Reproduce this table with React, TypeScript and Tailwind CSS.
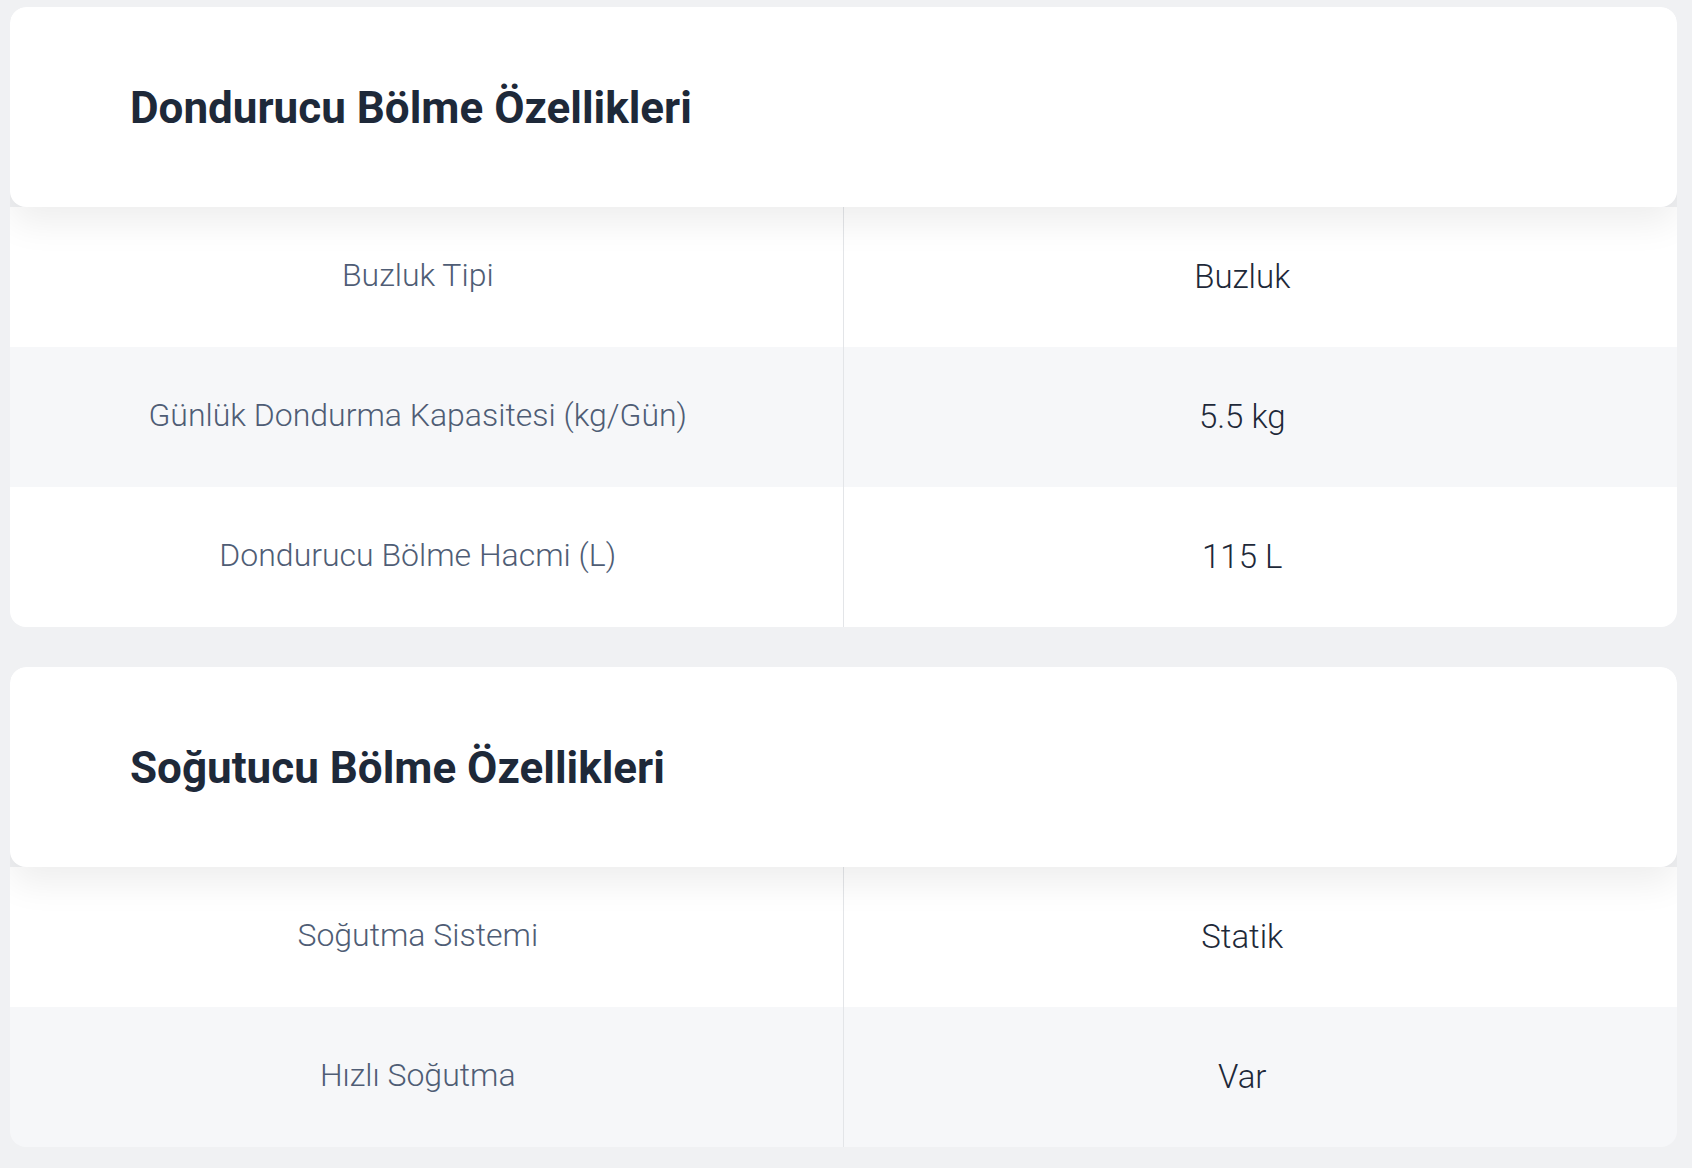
const sections = [
  {
    title: 'Dondurucu Bölme Özellikleri',
    rows: [
      { label: 'Buzluk Tipi', value: 'Buzluk' },
      { label: 'Günlük Dondurma Kapasitesi (kg/Gün)', value: '5.5 kg' },
      { label: 'Dondurucu Bölme Hacmi (L)', value: '115 L' },
    ],
  },
  {
    title: 'Soğutucu Bölme Özellikleri',
    rows: [
      { label: 'Soğutma Sistemi', value: 'Statik' },
      { label: 'Hızlı Soğutma', value: 'Var' },
    ],
  },
];

function SpecCard({ title, rows }: { title: string; rows: { label: string; value: string }[] }) {
  return (
    <div className="rounded-2xl overflow-hidden">
      {/* Header */}
      <div className="relative z-10 bg-white rounded-2xl h-[200px] flex items-center pl-[120px] pt-[2px] shadow-[0_16px_36px_rgba(0,0,0,0.07)]">
        <h2 className="text-[44px] font-bold text-[#1e2939] leading-none">{title}</h2>
      </div>

      {/* Rows */}
      {rows.map((row, i) => (
        <div
          key={row.label}
          className={`grid grid-cols-2 h-[140px] ${i % 2 === 1 ? 'bg-[#f6f7f9]' : 'bg-white'}`}
        >
          <div className="flex items-center justify-center pr-[17px] pb-[4px] border-r border-[#e3e5e8] text-[32px] font-light text-[#4f5d75]">
            {row.label}
          </div>
          <div className="flex items-center justify-center pr-[36px] text-[33px] font-light text-[#1e2939]">
            {row.value}
          </div>
        </div>
      ))}
    </div>
  );
}

export default function App() {
  return (
    <div
      className="min-h-screen bg-[#f0f1f3] pt-[7px] pb-[21px] pl-[10px] pr-[15px] flex flex-col gap-[40px]"
      style={{ fontFamily: 'Roboto, "Noto Sans", sans-serif' }}
    >
      {sections.map((s) => (
        <SpecCard key={s.title} title={s.title} rows={s.rows} />
      ))}
    </div>
  );
}
